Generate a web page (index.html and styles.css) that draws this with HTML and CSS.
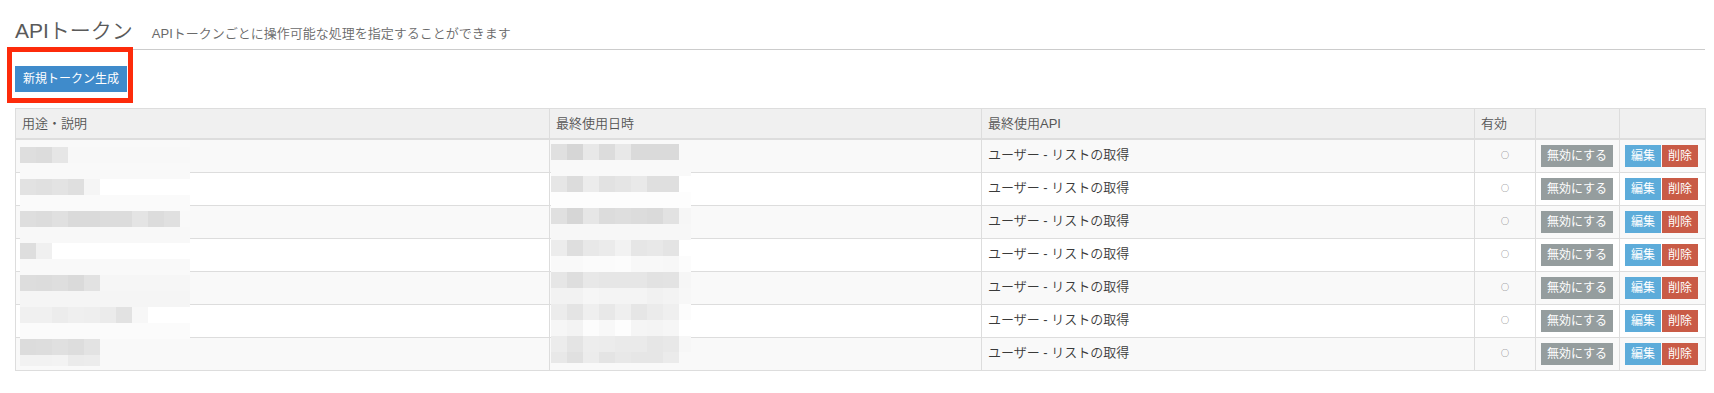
FILE: index.html
```html
<!DOCTYPE html>
<html lang="ja">
<head>
<meta charset="utf-8">
<title>APIトークン</title>
<link rel="stylesheet" href="styles.css">
</head>
<body>
<div class="page">
  <div class="page-header">
    <h1 class="title">APIトークン</h1>
    <span class="subtitle">APIトークンごとに操作可能な処理を指定することができます</span>
  </div>
  <div class="toolbar">
    <button class="btn btn-primary">新規トークン生成</button>
  </div>
  <div class="table-wrap">
    <table class="tokens">
      <colgroup>
        <col class="c-desc"><col class="c-date"><col class="c-api"><col class="c-flag"><col class="c-toggle"><col class="c-actions">
      </colgroup>
      <thead>
        <tr><th>用途・説明</th><th>最終使用日時</th><th>最終使用API</th><th>有効</th><th></th><th></th></tr>
      </thead>
      <tbody>
        <tr><td></td><td></td><td>ユーザー - リストの取得</td><td class="flag">○</td><td><div class="btns"><button class="btn btn-xs btn-grey">無効にする</button></div></td><td><div class="btns"><button class="btn btn-xs btn-info">編集</button><button class="btn btn-xs btn-danger">削除</button></div></td></tr>
        <tr><td></td><td></td><td>ユーザー - リストの取得</td><td class="flag">○</td><td><div class="btns"><button class="btn btn-xs btn-grey">無効にする</button></div></td><td><div class="btns"><button class="btn btn-xs btn-info">編集</button><button class="btn btn-xs btn-danger">削除</button></div></td></tr>
        <tr><td></td><td></td><td>ユーザー - リストの取得</td><td class="flag">○</td><td><div class="btns"><button class="btn btn-xs btn-grey">無効にする</button></div></td><td><div class="btns"><button class="btn btn-xs btn-info">編集</button><button class="btn btn-xs btn-danger">削除</button></div></td></tr>
        <tr><td></td><td></td><td>ユーザー - リストの取得</td><td class="flag">○</td><td><div class="btns"><button class="btn btn-xs btn-grey">無効にする</button></div></td><td><div class="btns"><button class="btn btn-xs btn-info">編集</button><button class="btn btn-xs btn-danger">削除</button></div></td></tr>
        <tr><td></td><td></td><td>ユーザー - リストの取得</td><td class="flag">○</td><td><div class="btns"><button class="btn btn-xs btn-grey">無効にする</button></div></td><td><div class="btns"><button class="btn btn-xs btn-info">編集</button><button class="btn btn-xs btn-danger">削除</button></div></td></tr>
        <tr><td></td><td></td><td>ユーザー - リストの取得</td><td class="flag">○</td><td><div class="btns"><button class="btn btn-xs btn-grey">無効にする</button></div></td><td><div class="btns"><button class="btn btn-xs btn-info">編集</button><button class="btn btn-xs btn-danger">削除</button></div></td></tr>
        <tr><td></td><td></td><td>ユーザー - リストの取得</td><td class="flag">○</td><td><div class="btns"><button class="btn btn-xs btn-grey">無効にする</button></div></td><td><div class="btns"><button class="btn btn-xs btn-info">編集</button><button class="btn btn-xs btn-danger">削除</button></div></td></tr>
      </tbody>
    </table>
    <div class="mosaic mosaic-desc" id="mosaic-desc"></div>
    <div class="mosaic mosaic-date" id="mosaic-date"></div>
  </div>
  <div class="annot-box"></div>
</div>
<script src="script.js"></script>
</body>
</html>
```

FILE: styles.css
```css
* { box-sizing: border-box; }
html, body { margin: 0; padding: 0; background: #fff; }
body {
  font-family: "Liberation Sans", "Noto Sans CJK JP", sans-serif;
  font-size: 13px;
  color: #444;
}
.page {
  position: relative;
  padding: 0 9px 0 15px;
  width: 1714px;
}
.page-header {
  display: flex;
  align-items: baseline;
  gap: 19px;
  padding: 20px 0 8px;
  border-bottom: 1px solid #cccccc;
  height: 50px;
}
.title {
  margin: 0;
  font-size: 21px;
  line-height: 21px;
  font-weight: 350;
  color: #5a5a5a;
}
.subtitle {
  font-size: 13px;
  font-weight: 350;
  color: #6a6a6a;
}
.toolbar {
  padding: 16px 0;
  height: 58px;
}
.btn {
  font-family: "Liberation Sans", "Noto Sans CJK JP", sans-serif;
  border: 1px solid transparent;
  color: #fff;
  cursor: pointer;
  margin: 0;
  border-radius: 0;
  display: inline-block;
  white-space: nowrap;
  flex: none;
}
.btn-primary {
  background: #3f8bcb;
  border-color: #3f8bcb;
  font-size: 12px;
  line-height: 18px;
  padding: 3px 7px;
  height: 26px;
}
.btn-xs {
  font-size: 12px;
  line-height: 18px;
  padding: 1px 5px;
  height: 22px;
}
.btn-grey { background: #959d9e; border-color: #959d9e; }
.btn-info { background: #5dacda; border-color: #5dacda; }
.btn-danger { background: #c95b46; border-color: #c95b46; margin-left: 1px; }
.btns { display: flex; }

.table-wrap { position: relative; }
.tokens {
  border-collapse: collapse;
  table-layout: fixed;
  width: 1690px;
  border: 1px solid #dddddd;
}
.c-desc { width: 534px; }
.c-date { width: 432px; }
.c-api { width: 493px; }
.c-flag { width: 61px; }
.c-toggle { width: 84px; }
.c-actions { width: 86px; }
.tokens th, .tokens td {
  border: 1px solid #dddddd;
  padding: 5px;
  line-height: 19px;
  vertical-align: top;
  text-align: left;
}
.tokens th {
  background: #f0f0f0;
  font-weight: 350;
  color: #555;
  font-size: 13px;
  border-bottom: 2px solid #dddddd;
  padding-left: 6px;
}
.tokens td { color: #3a3a3a; font-weight: 350; }
.tokens td:nth-child(3) { padding-left: 6px; }
.tokens tbody tr:nth-child(odd) td { background: #f9f9f9; }
.tokens td.flag {
  text-align: center;
  font-family: "Noto Sans CJK JP", sans-serif;
  font-size: 8px;
  color: #555;
}
.mosaic {
  position: absolute;
  display: grid;
}
.mosaic-desc {
  left: 5px;
  top: 39px;
  grid-template-columns: repeat(10, 16px) 10px;
  grid-template-rows: repeat(13, 16px) 11px;
}
.mosaic-date {
  left: 536px;
  top: 36px;
  grid-template-columns: repeat(8, 16px) 12px;
  grid-template-rows: repeat(13, 16px) 11px;
}
.annot-box {
  position: absolute;
  left: 7px;
  top: 47px;
  width: 126px;
  height: 56px;
  border: 5px solid #fd2b0b;
}
```

FILE: script.js
```js
(function () {
  var desc = [
    "de dc e6 f8 f8 f8 f8 f8 f8 f8 f8",
    "f9 f9 f9 f9 f9 f9 f9 f9 f9 f9 f9",
    "e2 e0 e3 df f5 ff ff ff ff ff ff",
    "fa fa fa fa fa fa fa fa fa fa fa",
    "de dc e0 da da dc dc e4 dc e0 f9",
    "f8 f8 f8 f8 f8 f8 f8 f8 f8 f8 f8",
    "de f0 ff ff ff ff ff ff ff ff ff",
    "f9 f9 f9 f9 f9 f9 f9 f9 f9 f9 f9",
    "dd dc de da e2 f6 f6 f6 f6 f6 f6",
    "f5 f5 f5 f5 f5 f5 f5 f5 f5 f5 f5",
    "f0 f0 ec ef ee eb e2 f7 ff ff ff",
    "fb fb fb fb fb fb fb fb fb fb fb",
    "dc dd e0 dd e3 f9 f9 f9 f9 f9 f9",
    "f2 f2 f3 eb ec f9 f9 f9 f9 f9 f9"
  ];
  var date = [
    "e0 d6 e8 dc e8 da da da f9",
    "f9 f9 f9 f9 f9 f9 f9 f9 f9",
    "e6 dc ec e2 e5 e9 df df ff",
    "fd fd fd fd fd fd fd fd fd",
    "e0 d6 e6 dc de dc da e2 f6",
    "f7 f7 f7 f7 f7 f7 f7 f7 f7",
    "ec de e8 eb f2 e6 e8 e4 ff",
    "f9 f9 fb fb fc f8 f8 f7 fc",
    "e6 de e8 e6 e6 e6 e2 e3 f6",
    "f2 f2 f6 f4 f4 f4 f1 f3 f7",
    "ec e4 ef e8 ef e6 eb ef fc",
    "f6 f3 fc f8 fd f5 f4 f6 ff",
    "ec e4 ed ec ea ea e6 e8 f7",
    "e8 e0 ec e4 e8 e6 e6 eb f9"
  ];
  function fill(id, rows) {
    var el = document.getElementById(id);
    rows.forEach(function (row) {
      row.split(" ").forEach(function (v) {
        var d = document.createElement("div");
        d.style.background = "#" + v + v + v;
        el.appendChild(d);
      });
    });
  }
  fill("mosaic-desc", desc);
  fill("mosaic-date", date);
})();
```
